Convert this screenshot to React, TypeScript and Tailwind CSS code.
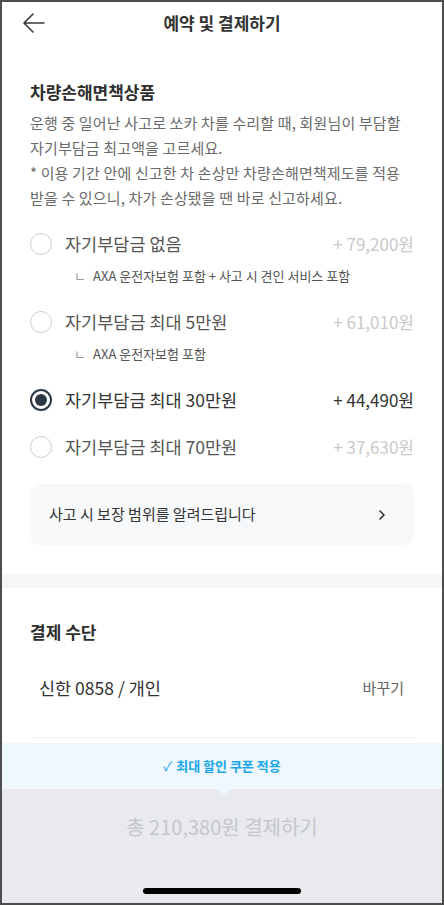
import { ChevronRight } from "lucide-react";

const OPTIONS = [
  { label: "자기부담금 없음", price: "+ 79,200원", note: "AXA 운전자보험 포함 + 사고 시 견인 서비스 포함", selected: false },
  { label: "자기부담금 최대 5만원", price: "+ 61,010원", note: "AXA 운전자보험 포함", selected: false },
  { label: "자기부담금 최대 30만원", price: "+ 44,490원", note: null, selected: true },
  { label: "자기부담금 최대 70만원", price: "+ 37,630원", note: null, selected: false }
];

function Radio({ on }: { on: boolean }) {
  return on ? (
    <span className="grid h-[22px] w-[22px] shrink-0 place-items-center rounded-full border-2 border-[#2c3846]">
      <span className="h-[12px] w-[12px] rounded-full bg-[#2c3846]" />
    </span>
  ) : (
    <span className="h-[22px] w-[22px] shrink-0 rounded-full border-[1.5px] border-[#cfcfcf]" />
  );
}

export default function App() {
  return (
    <div
      className="relative flex h-[905px] w-[444px] flex-col overflow-hidden border-2 border-[#4d4d4d] bg-white"
      style={{ fontFamily: '"Noto Sans CJK KR", "Noto Sans", sans-serif' }}
    >
      {/* header */}
      <div className="relative flex h-[42px] shrink-0 items-center justify-center">
        <svg
          className="absolute left-[20px] top-[10px]"
          width="24"
          height="22"
          viewBox="0 0 24 22"
          fill="none"
          stroke="#3a3a3a"
          strokeWidth="1.6"
          strokeLinecap="round"
          strokeLinejoin="round"
        >
          <path d="M22 11H2.5M11 2L2 11l9 9" />
        </svg>
        <h1 className="text-[17px] font-bold text-[#333]">예약 및 결제하기</h1>
      </div>

      {/* 차량손해면책상품 */}
      <div className="px-[28px] pt-[36px]">
        <h2 className="text-[17px] font-bold leading-[24px] text-[#2e2e2e]">차량손해면책상품</h2>
        <p className="mt-[6px] break-keep text-[15px] leading-[25px] tracking-[0.15px] text-[#6a6a6a]">
          운행 중 일어난 사고로 쏘카 차를 수리할 때, 회원님이 부담할 자기부담금 최고액을 고르세요.
          <br />* 이용 기간 안에 신고한 차 손상만 차량손해면책제도를 적용 받을 수 있으니, 차가 손상됐을 땐 바로 신고하세요.
        </p>

        <div className="mt-[9px] flex flex-col">
          {OPTIONS.map((o) => (
            <div key={o.label} className="pt-[13px] pb-[10px]">
              <div className="flex h-[24px] items-center">
                <Radio on={o.selected} />
                <span
                  className={
                    o.selected
                      ? "ml-[13px] text-[17.5px] text-[#333]"
                      : "ml-[13px] text-[17.5px] text-[#555]"
                  }
                >
                  {o.label}
                </span>
                <span
                  className={
                    o.selected
                      ? "ml-auto text-[17px] text-[#333]"
                      : "ml-auto text-[17px] text-[#c9c9c9]"
                  }
                >
                  {o.price}
                </span>
              </div>
              {o.note ? (
                <div className="mt-[11px] mb-[2px] flex h-[18px] items-center pl-[44px] text-[13px] text-[#555]">
                  <span className="mr-[7px] text-[#999]">ㄴ</span>
                  {o.note}
                </div>
              ) : null}
            </div>
          ))}
        </div>

        <div className="mt-[15px] flex h-[61px] items-center justify-between rounded-[10px] bg-[#f7f8fa] pl-[19px] pr-[24px]">
          <span className="text-[15px] text-[#333]">사고 시 보장 범위를 알려드립니다</span>
          <ChevronRight className="h-[16px] w-[16px] text-[#333]" strokeWidth={2.4} />
        </div>
      </div>

      <div className="mt-[29px] h-[14px] shrink-0 bg-[#f5f6f8]" />

      {/* 결제 수단 */}
      <div className="px-[28px] pt-[32px]">
        <h2 className="text-[17px] font-bold leading-[24px] text-[#2e2e2e]">결제 수단</h2>
        <div className="mt-[32px] flex h-[24px] items-center justify-between pl-[9px] pr-[10px]">
          <span className="text-[17.5px] text-[#333]">신한 0858 / 개인</span>
          <span className="text-[15px] text-[#666]">바꾸기</span>
        </div>
        <div className="mt-[37px] h-px bg-[#efefef]" />
      </div>

      {/* bottom */}
      <div className="mt-auto">
        <div className="relative flex h-[46px] items-center justify-center bg-[#eef8fd]">
          <span className="text-[13px] font-bold text-[#1aa5e6]">
            <span className="mr-[4px] font-normal">✓</span>최대 할인 쿠폰 적용
          </span>
          <span className="absolute -bottom-[6px] left-[215px] h-0 w-0 border-x-[7px] border-t-[6px] border-x-transparent border-t-[#eef8fd]" />
        </div>
        <div className="flex h-[114px] flex-col items-center bg-[#e9eaee] pt-[24px]">
          <span className="text-[20px] leading-[28px] text-[#c4c6cb]">총 210,380원 결제하기</span>
          <span className="mt-[47px] h-[6px] w-[158px] rounded-full bg-black" />
        </div>
      </div>
    </div>
  );
}
